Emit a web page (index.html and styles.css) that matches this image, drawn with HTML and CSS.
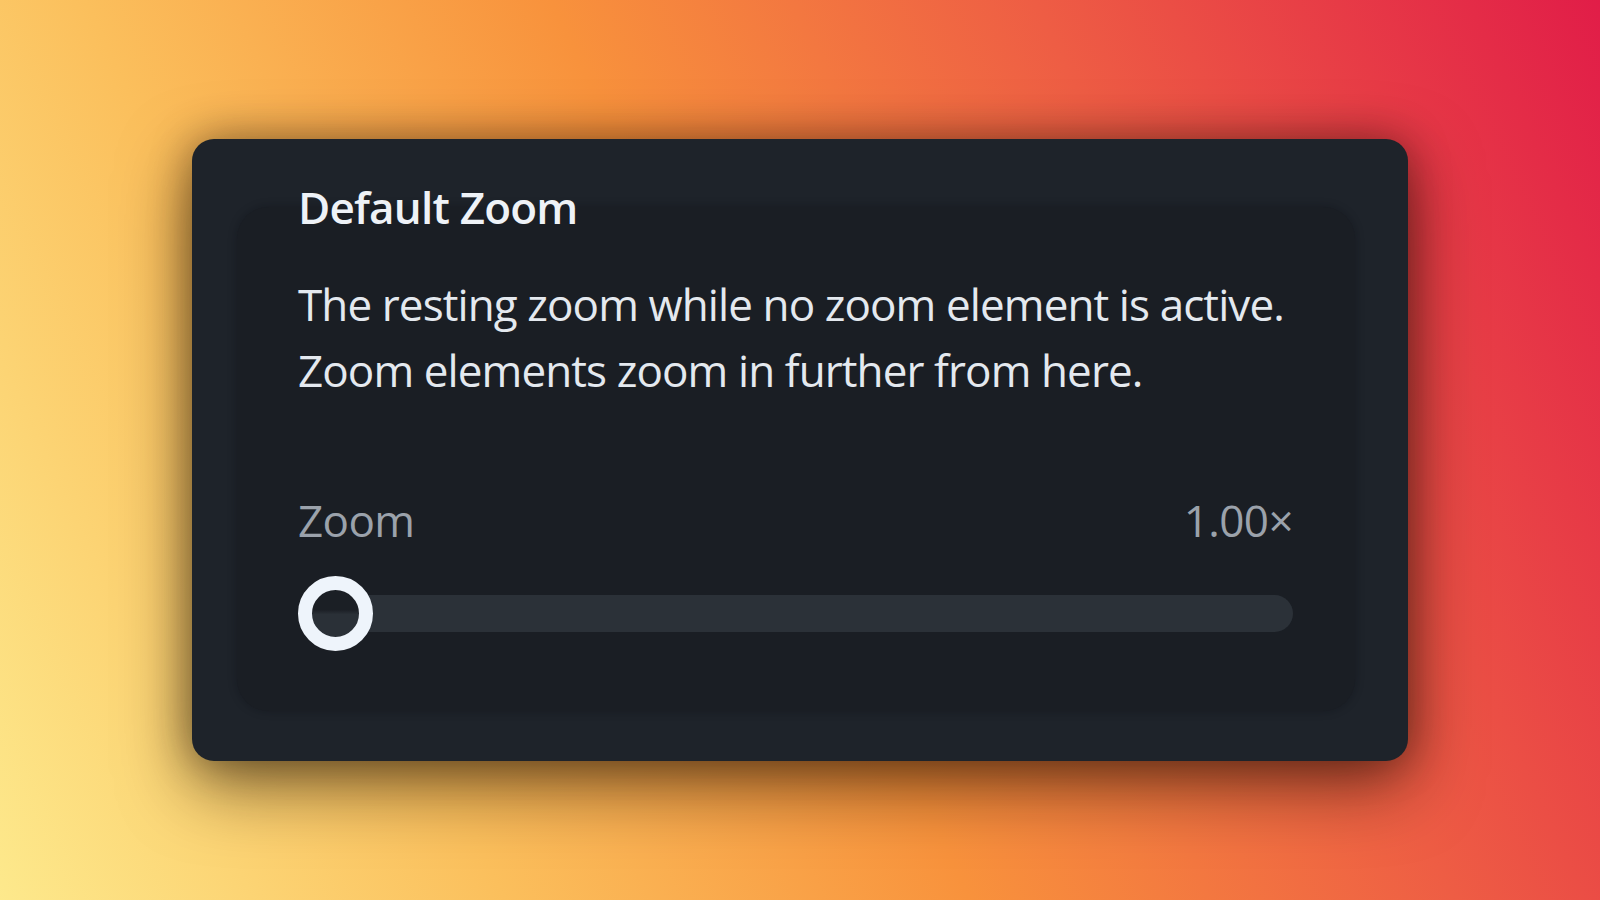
FILE: index.html
```html
<!DOCTYPE html>
<html lang="en">
<head>
<meta charset="utf-8">
<title>Default Zoom</title>
<link rel="stylesheet" href="styles.css">
</head>
<body>
  <main class="stage">
    <section class="card">
      <div class="panel">
        <h2 class="title">Default Zoom</h2>
        <p class="desc">The resting zoom while no zoom element is active.<br>Zoom elements zoom in further from here.</p>
        <div class="field">
          <div class="field-row">
            <span class="label">Zoom</span>
            <span class="value">1.00×</span>
          </div>
          <div class="slider">
            <div class="track"></div>
            <div class="thumb"></div>
          </div>
        </div>
      </div>
    </section>
  </main>
</body>
</html>
```
FILE: styles.css
```css
* { box-sizing: border-box; }

html, body {
  margin: 0;
  padding: 0;
  width: 100%;
  height: 100%;
}

body {
  font-family: "Open Sans", "Noto Sans", "DejaVu Sans", sans-serif;
  background: linear-gradient(65deg, #fde98c 0%, #fbbf5c 25%, #f8923c 48%, #ee5d44 72%, #e11d48 100%);
  overflow: hidden;
}

.stage {
  width: 100%;
  height: 100%;
  display: flex;
  align-items: center;
  justify-content: center;
}

.card {
  width: 1216px;
  height: 622px;
  background: #1e232a;
  border-radius: 22px;
  padding: 68px 53px 50px 45px;
  box-shadow: 0 24px 70px rgba(20, 10, 0, 0.55), 0 0 40px rgba(20, 10, 0, 0.35);
  display: flex;
  flex-direction: column;
}

.panel {
  flex: 1;
  background: #1a1e24;
  border-radius: 32px;
  padding: 0 62px 0 61px;
  box-shadow: 0 0 8px rgba(10, 12, 16, 0.35);
  display: flex;
  flex-direction: column;
}

.title {
  margin: -33px 0 0 0;
  font-size: 44px;
  line-height: 66px;
  font-weight: 600;
  color: #eef2f7;
  letter-spacing: -0.8px;
}

.desc {
  margin: 31px 0 0 0;
  font-size: 44px;
  line-height: 66px;
  font-weight: 400;
  color: #e4e9ef;
  letter-spacing: -0.9px;
  white-space: nowrap;
}

.field {
  margin-top: 84px;
  display: flex;
  flex-direction: column;
  gap: 23px;
}

.field-row {
  display: flex;
  justify-content: space-between;
  font-size: 44px;
  line-height: 66px;
  color: #9ba2ab;
  letter-spacing: -0.6px;
}

.slider {
  position: relative;
  height: 75px;
  display: flex;
  align-items: center;
}

.track {
  width: 100%;
  height: 37px;
  border-radius: 19px;
  background: #2b3138;
}

.thumb {
  position: absolute;
  left: 0;
  top: 0;
  width: 75px;
  height: 75px;
  border-radius: 50%;
  border: 14px solid #eef4fb;
  background: linear-gradient(to bottom, #1b1f25 0%, #1b1f25 42%, #2a3037 52%, #2a3037 100%);
}
```
